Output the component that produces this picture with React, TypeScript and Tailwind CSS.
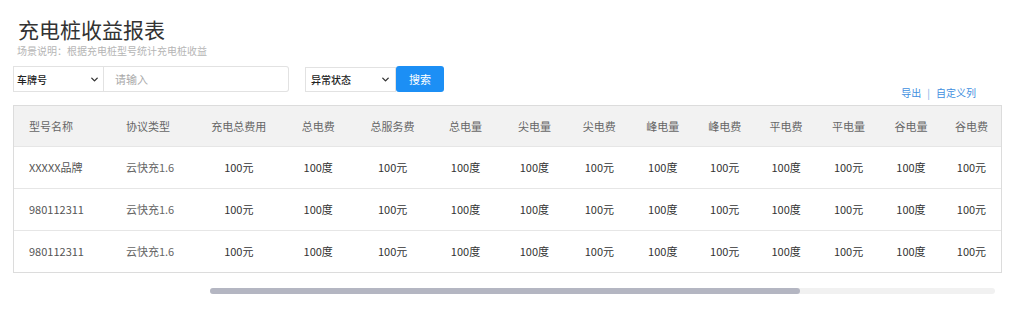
import { ChevronDown } from "lucide-react";

const cols = [
  { label: "型号名称", w: "w-[97px]", left: true },
  { label: "协议类型", w: "w-[86px]", left: true },
  { label: "充电总费用", w: "w-[84px]" },
  { label: "总电费", w: "w-[75px]" },
  { label: "总服务费", w: "w-[74px]" },
  { label: "总电量", w: "w-[72px]" },
  { label: "尖电量", w: "w-[66px]" },
  { label: "尖电费", w: "w-[64px]" },
  { label: "峰电量", w: "w-[63px]" },
  { label: "峰电费", w: "w-[61px]" },
  { label: "平电费", w: "w-[62px]" },
  { label: "平电量", w: "w-[63px]" },
  { label: "谷电量", w: "w-[62px]" },
  { label: "谷电费", w: "w-[59px]" },
];

const values = ["100元", "100度", "100元", "100度", "100度", "100元", "100度", "100元", "100度", "100元", "100度", "100元"];

const rows = [
  { name: "XXXXX品牌", proto: "云快充1.6" },
  { name: "980112311", proto: "云快充1.6" },
  { name: "980112311", proto: "云快充1.6" },
];

export default function App() {
  return (
    <div
      className="h-[312px] w-[1024px] bg-white text-[#333]"
      style={{ fontFamily: '"Noto Sans CJK SC", "Noto Sans", sans-serif' }}
    >
      <div className="pl-[18px] pt-[15px]">
        <h1 className="text-[21px] leading-[28px] text-[#333]">充电桩收益报表</h1>
        <p className="-ml-[1px] mt-[1px] text-[10px] leading-[14px] text-[#b5b5b5]">场景说明：根据充电桩型号统计充电桩收益</p>
      </div>

      <div className="mt-[8px] flex w-[976px] items-end justify-between pl-[13px]">
        <div className="flex items-center">
          <div className="flex h-[26px] w-[91px] items-center justify-between border border-[#e2e2e2] pl-[3px] pr-[3px] text-[10px] font-medium text-[#222]">
            <span>车牌号</span>
            <ChevronDown size={11} strokeWidth={3} className="text-[#333]" />
          </div>
          <div className="flex h-[26px] w-[185px] items-center rounded-r-[3px] border border-l-0 border-[#e2e2e2] pl-[11px] text-[11px] text-[#aaa]">
            请输入
          </div>
          <div className="ml-[16px] flex h-[25px] w-[91px] items-center justify-between border border-[#e2e2e2] pl-[5px] pr-[4px] text-[10px] font-medium text-[#222]">
            <span>异常状态</span>
            <ChevronDown size={11} strokeWidth={3} className="text-[#333]" />
          </div>
          <button className="h-[26px] w-[48px] rounded-[3px] bg-[#1c8ff5] text-[11px] text-white">搜索</button>
        </div>
        <div className="-mb-[7px] flex gap-[6px] text-[10px] leading-[12px] text-[#3f8fe0]">
          <span>导出</span>
          <span className="text-[#7aaee6]">|</span>
          <span>自定义列</span>
        </div>
      </div>

      <div className="ml-[13px] mt-[13px] w-[989px] border border-[#dcdcdc]">
        <table className="table-fixed border-collapse text-[11px]">
          <thead>
            <tr className="h-[40px] bg-[#f2f2f2] text-[#666]">
              {cols.map((c) => (
                <th key={c.label} className={`${c.w} font-normal ${c.left ? "pl-[15px] text-left" : "text-center"}`}>
                  {c.label}
                </th>
              ))}
            </tr>
          </thead>
          <tbody>
            {rows.map((r, i) => (
              <tr key={i} className="h-[42px] border-t border-[#e6e6e6] text-[#333]">
                <td className="pl-[15px] text-left text-[#555]">{r.name}</td>
                <td className="pl-[15px] text-left text-[#666]">{r.proto}</td>
                {values.map((v, j) => (
                  <td key={j} className="text-center">
                    {v}
                  </td>
                ))}
              </tr>
            ))}
          </tbody>
        </table>
      </div>

      <div className="ml-[210px] mt-[15px] flex h-[6px] w-[785px] rounded-[3px] bg-[#f1f1f1]">
        <div className="h-[6px] w-[590px] rounded-[3px] bg-[#b4b6c2]" />
      </div>
    </div>
  );
}
